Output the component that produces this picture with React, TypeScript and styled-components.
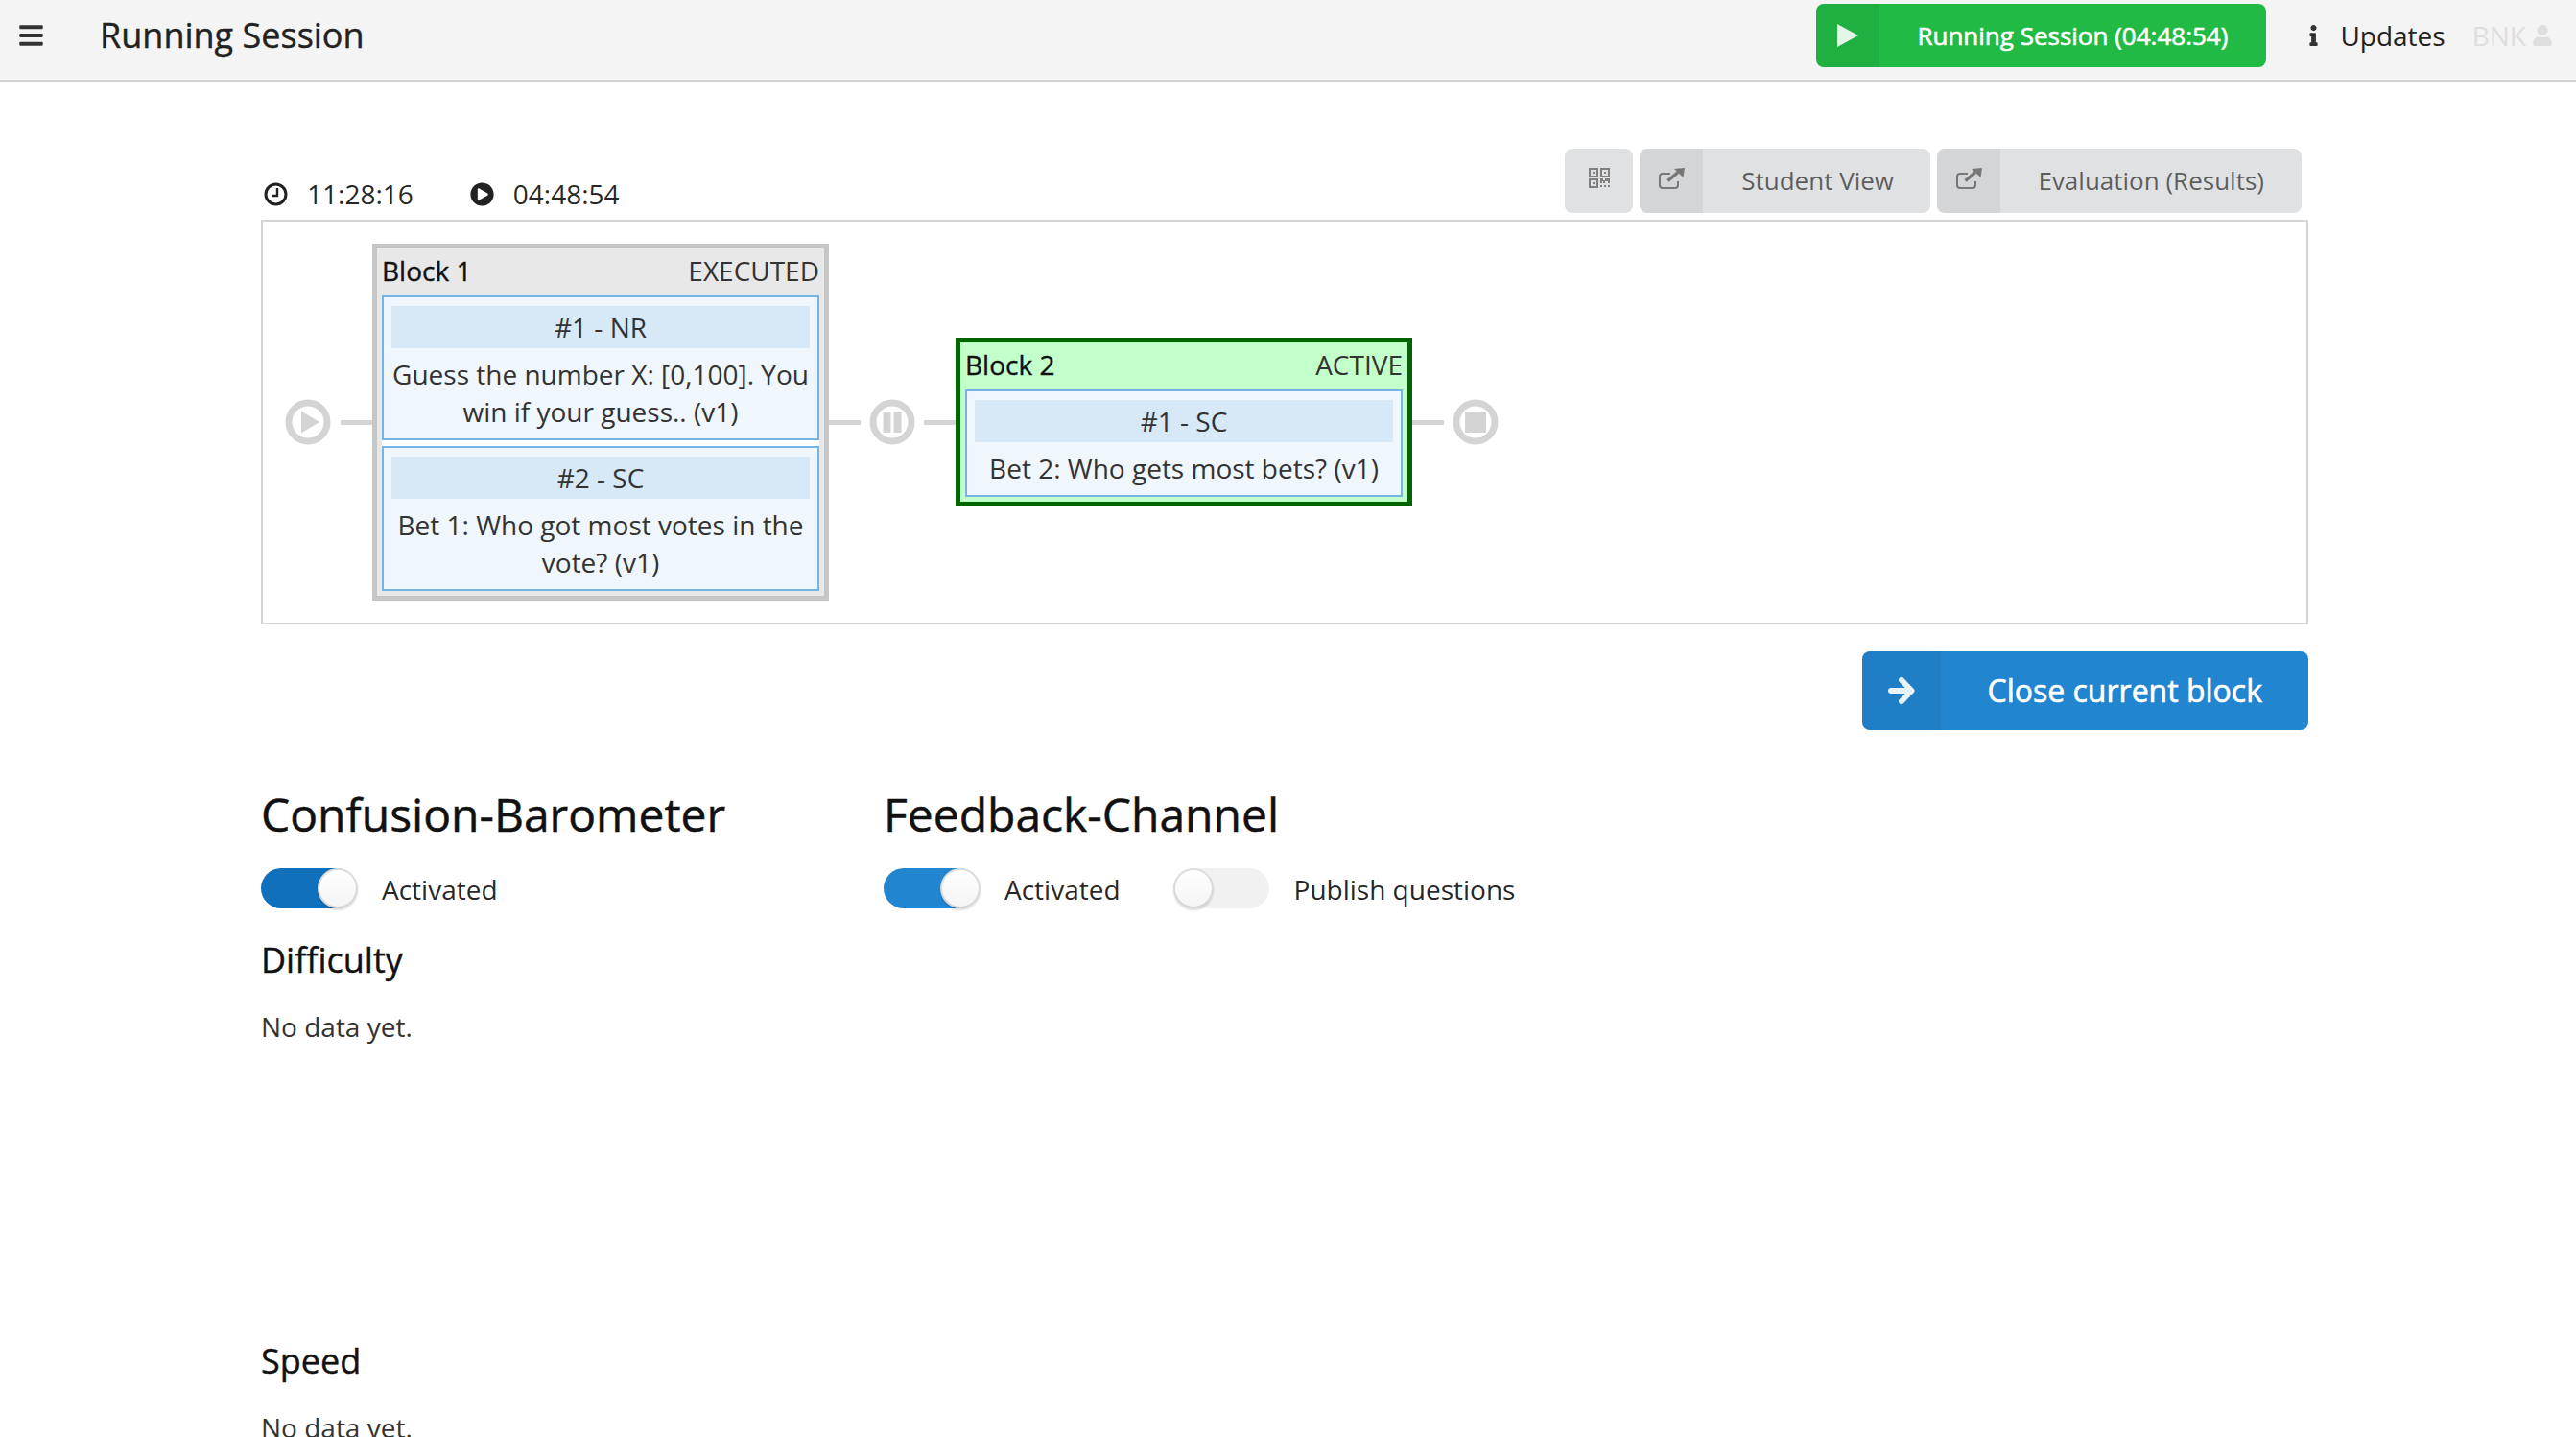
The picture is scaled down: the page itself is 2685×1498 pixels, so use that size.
import React from 'react';
import styled, { createGlobalStyle } from 'styled-components';
import { FaBars, FaInfo, FaPlayCircle, FaUser } from 'react-icons/fa';

const GlobalStyle = createGlobalStyle`
  html, body {
    margin: 0;
    height: 100%;
    overflow: hidden;
    background: #fff;
  }
  body {
    font-family: "Open Sans", "Liberation Sans", sans-serif;
    font-size: 28px;
    line-height: 40px;
    color: rgba(0, 0, 0, 0.87);
  }
  * {
    box-sizing: border-box;
  }
`;

const Header = styled.header`
  display: flex;
  align-items: center;
  height: 85px;
  padding: 4px 25px 13px 20px;
  background: #f4f4f4;
  border-bottom: 2px solid #d4d4d5;
`;

const MenuIcon = styled(FaBars)`
  width: 25px;
  height: 28px;
  color: #333;
  margin-right: 59px;
`;

const Title = styled.h1`
  flex: 1;
  margin: 0;
  font-size: 36px;
  font-weight: 500;
  line-height: 44px;
  color: #222;
  -webkit-text-stroke: 0.4px #222;
`;

const LabeledButton = styled.div<{ $bg: string; $fg: string; $h: number; $w: number; $size: number; $iconW: number; $stroke?: boolean }>`
  display: flex;
  align-items: center;
  justify-content: flex-end;
  position: relative;
  width: ${(p) => p.$w}px;
  height: ${(p) => p.$h}px;
  padding-left: ${(p) => p.$iconW}px;
  border-radius: 8px;
  overflow: hidden;
  background: ${(p) => p.$bg};
  color: ${(p) => p.$fg};
  font-size: ${(p) => p.$size}px;
  font-weight: 500;
  white-space: nowrap;
  -webkit-text-stroke: ${(p) => (p.$stroke ? '0.6px #fff' : '0')};
`;

const ToolButton = styled(LabeledButton)`
  padding-bottom: 2px;
`;

const ButtonIcon = styled.span<{ $w: number }>`
  display: flex;
  align-items: center;
  justify-content: center;
  position: absolute;
  left: 0;
  top: 0;
  bottom: 0;
  width: ${(p) => p.$w}px;
  background: rgba(0, 0, 0, 0.05);
`;

const ButtonLabel = styled.span<{ $right: number }>`
  margin-right: ${(p) => p.$right}px;
`;

const RunningButton = styled(LabeledButton)`
  margin-right: 44px;
`;

const Updates = styled.div`
  display: flex;
  align-items: center;
  color: #222;
`;

const InfoIcon = styled(FaInfo)`
  width: 11px;
  height: 22px;
  color: #333;
  margin-right: 22px;
`;

const UserBadge = styled.div`
  display: flex;
  align-items: center;
  color: #dedede;
  margin-left: 28px;
`;

const UserIcon = styled(FaUser)`
  width: 20px;
  height: 22px;
  margin-left: 7px;
`;

const Page = styled.main`
  width: 2134px;
  margin-left: 272px;
`;

const TopRow = styled.div`
  display: flex;
  justify-content: space-between;
  height: 144px;
  padding-top: 70px;
`;

const Times = styled.div`
  display: flex;
  align-items: center;
  height: 66px;
  padding-left: 3px;
  padding-top: 16px;
  margin-top: 6px;
`;

const Time = styled.span`
  display: flex;
  align-items: center;
  margin-right: 59px;
`;

const ClockGlyph = styled.svg`
  width: 25px;
  height: 25px;
  margin-right: 20px;
`;

const PlayGlyph = styled(FaPlayCircle)`
  width: 25px;
  height: 25px;
  margin-right: 20px;
  color: #222;
`;

const Toolbar = styled.div`
  display: flex;
  gap: 7px;
  margin-right: 7px;
`;

const QrButton = styled.div`
  display: flex;
  align-items: center;
  justify-content: center;
  width: 71px;
  height: 67px;
  padding-bottom: 7px;
  border-radius: 8px;
  background: #e0e1e2;
`;

const ExternalGlyph = styled.svg`
  width: 27px;
  height: 22px;
  margin-bottom: 5px;
`;

const Diagram = styled.section`
  display: flex;
  align-items: center;
  height: 422px;
  padding-left: 23px;
  border: 2px solid #d4d4d5;
`;

const Node = styled.svg`
  flex: none;
  width: 48px;
  height: 48px;
  margin: 0 9px;
  &:first-child {
    margin: 0 10px 0 0;
  }
`;

const Connector = styled.div`
  flex: none;
  width: 33px;
  height: 5px;
  background: #d4d4d4;
`;

const Block = styled.div<{ $active?: boolean }>`
  flex: none;
  width: 476px;
  padding: 4px 5px 5px;
  border: 5px solid ${(p) => (p.$active ? '#006400' : '#c6c6c6')};
  background: ${(p) => (p.$active ? '#c3ffca' : '#e8e8e8')};
`;

const BlockHead = styled.div`
  display: flex;
  justify-content: space-between;
  height: 45px;
  line-height: 38px;
`;

const BlockName = styled.span`
  font-weight: 500;
  color: #111;
  -webkit-text-stroke: 0.4px #111;
`;

const BlockState = styled.span`
  color: #333;
`;

const Questions = styled.div`
  display: flex;
  flex-direction: column;
  gap: 6px;
  background: #fff;
`;

const Question = styled.div`
  padding: 9px 8px 8px;
  border: 2px solid #75b5e6;
  background: #eff6fc;
  text-align: center;
  color: #333;
`;

const QuestionHead = styled.div`
  height: 44px;
  line-height: 44px;
  background: #d7e8f7;
  margin-bottom: 8px;
`;

const QuestionText = styled.div`
  line-height: 39px;
`;

const Actions = styled.div`
  display: flex;
  justify-content: flex-end;
  margin-top: 28px;
`;

const Columns = styled.div`
  display: grid;
  grid-template-columns: 649px 1fr;
  margin-top: 56px;
`;

const Heading = styled.h2`
  margin: 0 0 24px;
  font-size: 48px;
  line-height: 64px;
  font-weight: 500;
  color: #111;
  -webkit-text-stroke: 0.5px #111;
`;

const SubHeading = styled.h3<{ $gap: number }>`
  margin: ${(p) => p.$gap}px 0 0;
  font-size: 36px;
  line-height: 48px;
  font-weight: 500;
  color: #111;
  -webkit-text-stroke: 0.4px #111;
`;

const Empty = styled.p`
  margin: 25px 0 0;
  color: #333;
`;

const ToggleRow = styled.div`
  display: flex;
  align-items: center;
  height: 42px;
  gap: 55px;
`;

const ToggleField = styled.label`
  display: flex;
  align-items: center;
  gap: 26px;
`;

const ToggleText = styled.span`
  padding-top: 2px;
`;

const ToggleTrack = styled.span<{ $color: string; $on: boolean }>`
  position: relative;
  display: block;
  width: 100px;
  height: 42px;
  border-radius: 21px;
  background: ${(p) => p.$color};
  &::after {
    content: '';
    position: absolute;
    top: 0;
    left: ${(p) => (p.$on ? '59px' : '0')};
    width: 42px;
    height: 42px;
    border-radius: 50%;
    background: linear-gradient(#fff, #f4f4f4);
    box-shadow: 0 2px 2px 0 rgba(34, 36, 38, 0.15), 0 0 0 2px rgba(34, 36, 38, 0.15) inset;
  }
`;

const ExternalIcon = () => (
  <ExternalGlyph viewBox="0 0 27 22">
    <path d="M12 6H4a3 3 0 0 0-3 3v9a3 3 0 0 0 3 3h13a3 3 0 0 0 3-3v-4" fill="none" stroke="#777" strokeWidth="2" />
    <path d="M9.5 13.5L20 4.5" fill="none" stroke="#777" strokeWidth="3.6" />
    <path d="M27 0L16 1l9.5 9z" fill="#777" />
  </ExternalGlyph>
);

const QrIcon = () => (
  <svg width="22" height="21" viewBox="0 0 22 21">
    <g fill="none" stroke="#808080" strokeWidth="2">
      <rect x="1" y="1" width="8" height="8" />
      <rect x="13" y="1" width="8" height="8" />
      <rect x="1" y="12" width="8" height="8" />
    </g>
    <g fill="#808080">
      <rect x="4" y="4" width="2" height="2" />
      <rect x="16" y="4" width="2" height="2" />
      <rect x="4" y="15" width="2" height="2" />
      <path d="M12 11h3v2h2v-2h5v5h-2v-2h-3v2h-2v-2h-1v2h-2z" />
      <rect x="12" y="18" width="2" height="2" />
      <rect x="16" y="18" width="2" height="2" />
      <rect x="20" y="18" width="2" height="2" />
    </g>
  </svg>
);

const Toggle = ({ on, color, label }: { on: boolean; color: string; label: string }) => (
  <ToggleField>
    <ToggleTrack $on={on} $color={color} />
    <ToggleText>{label}</ToggleText>
  </ToggleField>
);

const StartNode = () => (
  <Node viewBox="0 0 48 48">
    <circle cx="24" cy="24" r="20" fill="none" stroke="#d4d4d4" strokeWidth="7" />
    <path d="M17 12.5L36 24L17 35.5z" fill="#d4d4d4" />
  </Node>
);

const PauseNode = () => (
  <Node viewBox="0 0 48 48">
    <circle cx="24" cy="24" r="20" fill="none" stroke="#d4d4d4" strokeWidth="7" />
    <rect x="14.5" y="13" width="8" height="22" fill="#d4d4d4" />
    <rect x="25.5" y="13" width="8" height="22" fill="#d4d4d4" />
  </Node>
);

const StopNode = () => (
  <Node viewBox="0 0 48 48">
    <circle cx="24" cy="24" r="20" fill="none" stroke="#d4d4d4" strokeWidth="7" />
    <rect x="13" y="13" width="22" height="22" fill="#d4d4d4" />
  </Node>
);

const App = () => (
  <>
    <GlobalStyle />
    <Header>
      <MenuIcon />
      <Title>Running Session</Title>
      <RunningButton $bg="#21ba45" $fg="#fff" $w={469} $h={66} $size={26} $iconW={66} $stroke>
        <ButtonIcon $w={66}>
          <svg width="22" height="24" viewBox="0 0 22 24">
            <path d="M0 0L22 12L0 24z" fill="#e4f6e8" />
          </svg>
        </ButtonIcon>
        <ButtonLabel $right={40}>Running Session (04:48:54)</ButtonLabel>
      </RunningButton>
      <Updates>
        <InfoIcon />
        Updates
      </Updates>
      <UserBadge>
        BNK
        <UserIcon />
      </UserBadge>
    </Header>
    <Page>
      <TopRow>
        <Times>
          <Time>
            <ClockGlyph viewBox="0 0 25 25" fill="none" stroke="#222" strokeWidth="3">
              <circle cx="12.5" cy="12.5" r="10.5" />
              <path d="M14 6v8H9" strokeWidth="2.4" />
            </ClockGlyph>
            11:28:16
          </Time>
          <Time>
            <PlayGlyph />
            04:48:54
          </Time>
        </Times>
        <Toolbar>
          <QrButton>
            <QrIcon />
          </QrButton>
          <ToolButton $bg="#e0e1e2" $fg="rgba(0,0,0,0.6)" $w={303} $h={67} $size={26} $iconW={66}>
            <ButtonIcon $w={66}>
              <ExternalIcon />
            </ButtonIcon>
            <ButtonLabel $right={38}>Student View</ButtonLabel>
          </ToolButton>
          <ToolButton $bg="#e0e1e2" $fg="rgba(0,0,0,0.6)" $w={380} $h={67} $size={26} $iconW={66}>
            <ButtonIcon $w={66}>
              <ExternalIcon />
            </ButtonIcon>
            <ButtonLabel $right={39}>Evaluation (Results)</ButtonLabel>
          </ToolButton>
        </Toolbar>
      </TopRow>
      <Diagram>
        <StartNode />
        <Connector />
        <Block>
          <BlockHead>
            <BlockName>Block 1</BlockName>
            <BlockState>EXECUTED</BlockState>
          </BlockHead>
          <Questions>
            <Question>
              <QuestionHead>#1 - NR</QuestionHead>
              <QuestionText>Guess the number X: [0,100]. You win if your guess.. (v1)</QuestionText>
            </Question>
            <Question>
              <QuestionHead>#2 - SC</QuestionHead>
              <QuestionText>Bet 1: Who got most votes in the vote? (v1)</QuestionText>
            </Question>
          </Questions>
        </Block>
        <Connector />
        <PauseNode />
        <Connector />
        <Block $active>
          <BlockHead>
            <BlockName>Block 2</BlockName>
            <BlockState>ACTIVE</BlockState>
          </BlockHead>
          <Questions>
            <Question>
              <QuestionHead>#1 - SC</QuestionHead>
              <QuestionText>Bet 2: Who gets most bets? (v1)</QuestionText>
            </Question>
          </Questions>
        </Block>
        <Connector />
        <StopNode />
      </Diagram>
      <Actions>
        <LabeledButton $bg="#2185d0" $fg="#fff" $w={465} $h={82} $size={32} $iconW={82} $stroke>
          <ButtonIcon $w={82}>
            <svg width="28" height="30" viewBox="0 0 28 30" fill="none" stroke="#e9f3fa" strokeWidth="6" strokeLinecap="round" strokeLinejoin="round">
              <path d="M3 15H23M14 4L24.5 15L14 26" />
            </svg>
          </ButtonIcon>
          <ButtonLabel $right={48}>Close current block</ButtonLabel>
        </LabeledButton>
      </Actions>
      <Columns>
        <div>
          <Heading>Confusion-Barometer</Heading>
          <ToggleRow>
            <Toggle on color="#1070bb" label="Activated" />
          </ToggleRow>
          <SubHeading $gap={30}>Difficulty</SubHeading>
          <Empty>No data yet.</Empty>
          <SubHeading $gap={305}>Speed</SubHeading>
          <Empty>No data yet.</Empty>
        </div>
        <div>
          <Heading>Feedback-Channel</Heading>
          <ToggleRow>
            <Toggle on color="#2185d0" label="Activated" />
            <Toggle on={false} color="#f1f1f1" label="Publish questions" />
          </ToggleRow>
        </div>
      </Columns>
    </Page>
  </>
);

export default App;
